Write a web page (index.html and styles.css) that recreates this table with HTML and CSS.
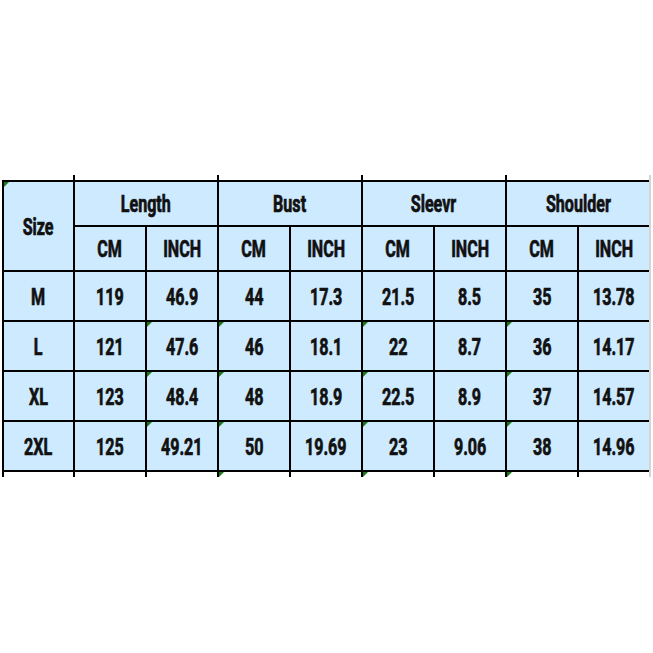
FILE: index.html
```html
<!DOCTYPE html>
<html>
<head>
<meta charset="utf-8">
<link rel="stylesheet" href="styles.css">
</head>
<body>
<div class="page">
  <div class="sheet">
    <div class="stub stub-first"></div>
    <div class="stub span2"></div>
    <div class="stub span2"></div>
    <div class="stub span2"></div>
    <div class="stub span2"></div>

    <div class="cell size mark"><span>Size</span></div>
    <div class="cell span2"><span>Length</span></div>
    <div class="cell span2"><span>Bust</span></div>
    <div class="cell span2"><span>Sleevr</span></div>
    <div class="cell span2"><span>Shoulder</span></div>

    <div class="cell"><span>CM</span></div>
    <div class="cell"><span>INCH</span></div>
    <div class="cell"><span>CM</span></div>
    <div class="cell"><span>INCH</span></div>
    <div class="cell"><span>CM</span></div>
    <div class="cell"><span>INCH</span></div>
    <div class="cell"><span>CM</span></div>
    <div class="cell"><span>INCH</span></div>

    <div class="cell row"><span>M</span></div>
    <div class="cell row"><span>119</span></div>
    <div class="cell row"><span>46.9</span></div>
    <div class="cell row"><span>44</span></div>
    <div class="cell row"><span>17.3</span></div>
    <div class="cell row"><span>21.5</span></div>
    <div class="cell row"><span>8.5</span></div>
    <div class="cell row"><span>35</span></div>
    <div class="cell row"><span>13.78</span></div>

    <div class="cell row"><span>L</span></div>
    <div class="cell row"><span>121</span></div>
    <div class="cell row mark"><span>47.6</span></div>
    <div class="cell row mark"><span>46</span></div>
    <div class="cell row"><span>18.1</span></div>
    <div class="cell row mark"><span>22</span></div>
    <div class="cell row"><span>8.7</span></div>
    <div class="cell row mark"><span>36</span></div>
    <div class="cell row"><span>14.17</span></div>

    <div class="cell row"><span>XL</span></div>
    <div class="cell row"><span>123</span></div>
    <div class="cell row mark"><span>48.4</span></div>
    <div class="cell row mark"><span>48</span></div>
    <div class="cell row"><span>18.9</span></div>
    <div class="cell row mark"><span>22.5</span></div>
    <div class="cell row"><span>8.9</span></div>
    <div class="cell row mark"><span>37</span></div>
    <div class="cell row"><span>14.57</span></div>

    <div class="cell row"><span>2XL</span></div>
    <div class="cell row"><span>125</span></div>
    <div class="cell row mark"><span>49.21</span></div>
    <div class="cell row mark"><span>50</span></div>
    <div class="cell row"><span>19.69</span></div>
    <div class="cell row mark"><span>23</span></div>
    <div class="cell row"><span>9.06</span></div>
    <div class="cell row mark"><span>38</span></div>
    <div class="cell row"><span>14.96</span></div>

    <div class="stub"></div>
    <div class="stub"></div>
    <div class="stub"></div>
    <div class="stub mark"></div>
    <div class="stub"></div>
    <div class="stub mark"></div>
    <div class="stub"></div>
    <div class="stub mark"></div>
    <div class="stub"></div>
  </div>
</div>
</body>
</html>
```

FILE: styles.css
```css
html, body {
  margin: 0;
  padding: 0;
  background: #ffffff;
}

.page {
  padding-top: 175px;
  padding-left: 2px;
}

.sheet {
  display: grid;
  width: max-content;
  grid-template-columns: 69px repeat(8, 70px);
  grid-template-rows: 5px 43px 43px 48px 48px 48px 48px 5px;
  gap: 2px;
  padding-left: 2px;
  background: #000000;
  border-right: 2px solid #d4d4d4;
  font-family: "Roboto", "DejaVu Sans", sans-serif;
  font-weight: 700;
  font-size: 23px;
  color: #111111;
}

.stub {
  background: #ffffff;
  position: relative;
}

.stub-first {
  margin-left: -2px;
}

.span2 {
  grid-column: span 2;
}

.cell {
  background: #cdeaff;
  display: flex;
  align-items: center;
  justify-content: center;
  position: relative;
  padding-top: 2px;
}

.cell span {
  display: inline-block;
  transform: scaleX(0.7);
  line-height: 1;
  -webkit-text-stroke: 0.7px #111111;
}

.size {
  grid-row: span 2;
}

.mark::before {
  content: "";
  position: absolute;
  left: 0;
  top: 0;
  width: 0;
  height: 0;
  border-top: 5px solid #1a7a1a;
  border-right: 5px solid transparent;
}
```
